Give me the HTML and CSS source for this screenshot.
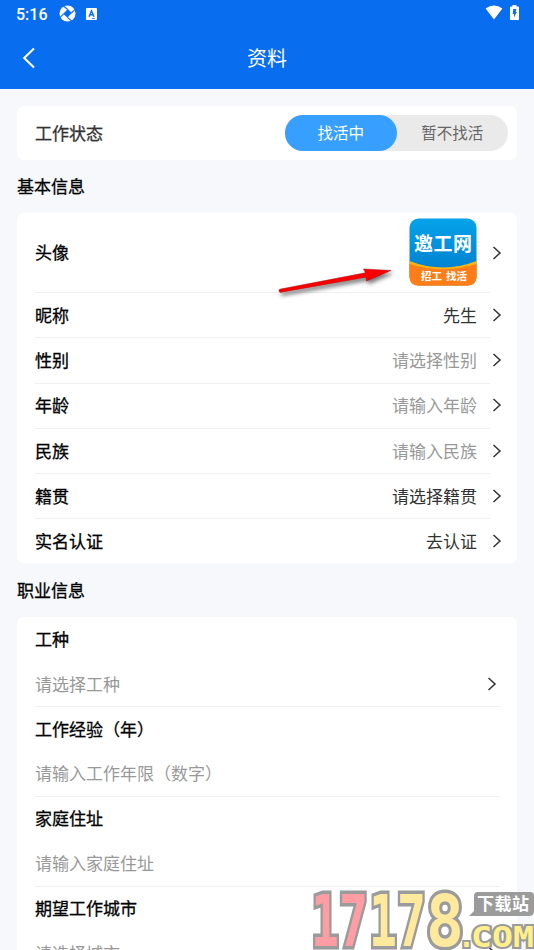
FILE: index.html
```html
<!DOCTYPE html>
<html lang="zh-CN">
<head>
<meta charset="utf-8">
<title>资料</title>
<link rel="stylesheet" href="styles.css">
</head>
<body>
<svg class="defs" width="0" height="0">
  <symbol id="chevron" viewBox="0 0 10 14"><path d="M1.5 1 L8 7 L1.5 13" fill="none" stroke="#333" stroke-width="1.5"/></symbol>
  <linearGradient id="sky" x1="0" y1="0" x2="0" y2="1"><stop offset="0" stop-color="#05a3ea"/><stop offset="1" stop-color="#0277c8"/></linearGradient>
</svg>
<div class="screen">
  <header class="header">
    <div class="status">
      <span class="clock">5:16</span>
      <svg class="swirl" width="17" height="17" viewBox="0 0 17 17"><circle cx="8.5" cy="8.5" r="8" fill="#fff"/><path d="M8.8 4 L12.8 8 L8.4 12.8 L4.2 8.8Z" fill="#096df0"/><path d="M8.8 4.5 L4.4 1 M12.4 8 L16 4.4 M8.4 12.3 L12.6 16 M4.6 8.8 L1 12.6" stroke="#096df0" stroke-width="1.1"/></svg>
      <svg class="abox" width="11" height="12" viewBox="0 0 11 12"><rect width="11" height="12" rx="1" fill="#fff"/><path d="M3 8.7 L5.5 2.8 L8 8.7 M4 6.8H7" fill="none" stroke="#096df0" stroke-width="1.4"/><path d="M6 10.5h3" stroke="#096df0" stroke-width=".7"/></svg>
      <svg class="wifi" width="18" height="15" viewBox="0 0 18 15"><path d="M.6 3.5 Q9 -2.5 17.4 3.5 L9 14.5Z" fill="#fff"/></svg>
      <svg class="battery" width="9" height="15" viewBox="0 0 9 15"><path d="M2.5 0h4v1.4H8q1 0 1 1V15H0V2.4q0-1 1-1h1.5Z" fill="#fff"/><path d="M3.3 4h3L5.7 7h1.1L4 12.5V9H2.7Z" fill="#096df0"/></svg>
    </div>
    <div class="nav">
      <svg class="back" width="14" height="22" viewBox="0 0 14 22"><path d="M12 1.5 L2.2 11 L12 20.5" fill="none" stroke="#fff" stroke-width="2.1"/></svg>
      <h1 class="title">资料</h1>
    </div>
  </header>

  <main class="content">
    <section class="card work">
      <span class="label soft">工作状态</span>
      <div class="switch"><span class="option on">找活中</span><span class="option">暂不找活</span></div>
    </section>

    <h2 class="heading">基本信息</h2>
    <section class="card basic">
      <div class="row tall"><span class="label">头像</span>
        <svg class="avatar" width="68" height="68" viewBox="0 0 68 68">
          <rect x=".5" y=".5" width="67" height="67" rx="9" fill="url(#sky)"/>
          <path d="M.5 43 Q34 56 67.5 43 V58.5 Q67.5 67.5 58.5 67.5 H9.5 Q.5 67.5 .5 58.5Z" fill="#ffb414"/>
          <path d="M.5 46 Q34 56.5 67.5 46 V58.5 Q67.5 67.5 58.5 67.5 H9.5 Q.5 67.5 .5 58.5Z" fill="#ff7d19"/>
          <text class="logo-name" x="5" y="33" textLength="58">邀工网</text>
          <text class="logo-tag" x="12" y="61.5">招工</text><text class="logo-tag" x="37" y="61.5">找活</text>
        </svg>
        <svg class="arrow"><use href="#chevron"/></svg></div>
      <div class="row"><span class="label">昵称</span><span class="value">先生</span><svg class="arrow"><use href="#chevron"/></svg></div>
      <div class="row"><span class="label">性别</span><span class="value hint">请选择性别</span><svg class="arrow"><use href="#chevron"/></svg></div>
      <div class="row"><span class="label">年龄</span><span class="value hint">请输入年龄</span><svg class="arrow"><use href="#chevron"/></svg></div>
      <div class="row"><span class="label">民族</span><span class="value hint">请输入民族</span><svg class="arrow"><use href="#chevron"/></svg></div>
      <div class="row"><span class="label">籍贯</span><span class="value">请选择籍贯</span><svg class="arrow"><use href="#chevron"/></svg></div>
      <div class="row"><span class="label">实名认证</span><span class="value">去认证</span><svg class="arrow"><use href="#chevron"/></svg></div>
    </section>

    <h2 class="heading">职业信息</h2>
    <section class="card job">
      <div class="field"><span class="label">工种</span><div class="entry"><span class="hint">请选择工种</span><svg class="arrow"><use href="#chevron"/></svg></div></div>
      <div class="field"><span class="label">工作经验（年）</span><div class="entry"><span class="hint">请输入工作年限（数字）</span></div></div>
      <div class="field"><span class="label">家庭住址</span><div class="entry"><span class="hint">请输入家庭住址</span></div></div>
      <div class="field"><span class="label">期望工作城市</span><div class="entry"><span class="hint">请选择城市</span><svg class="arrow"><use href="#chevron"/></svg></div></div>
    </section>
  </main>

  <svg class="pointer" width="124" height="40" viewBox="0 0 124 40"><path d="M3.5 24.3 L89.5 7.8 L87.5 4 L115 5.5 L90.5 16 L90 12.2 L4 27.4 Q2 26 3.5 24.3Z" fill="#f90000" stroke="#b00c0c" stroke-width=".5"/></svg>

  <svg class="watermark" width="226" height="64" viewBox="0 0 226 64">
    <g class="digits">
      <text class="red" x="3" y="60" textLength="28" lengthAdjust="spacingAndGlyphs">1</text>
      <text class="red" x="31" y="60" textLength="29" lengthAdjust="spacingAndGlyphs">7</text>
      <text x="61" y="60" textLength="28" lengthAdjust="spacingAndGlyphs">1</text>
      <text x="89" y="60" textLength="29" lengthAdjust="spacingAndGlyphs">7</text>
      <text x="118" y="60" textLength="38" lengthAdjust="spacingAndGlyphs">8</text>
    </g>
    <path d="M175 6 H222 Q226 6 226 10 V25 Q226 30 221 30 H161 L166 25 V10 Q166 6 170 6Z" fill="#9b9b9b"/>
    <text class="site" x="169" y="24" textLength="52">下载站</text>
    <text class="domain" x="150" y="61">.</text><text class="domain" x="163" y="61" textLength="63" lengthAdjust="spacingAndGlyphs">COM</text>
  </svg>
</div>
</body>
</html>
```
FILE: styles.css
```css
* { box-sizing: border-box; }
body { margin: 0; background: #f6f8fb; font-family: Roboto, "Noto Sans CJK SC", sans-serif; font-size: 17px; color: #333; }
.defs { position: absolute; }
.screen { position: relative; width: 534px; height: 950px; overflow: hidden; }
.header { height: 89px; background: #096df0; color: #fff; }
.status { height: 28px; padding: 0 15px 0 16px; display: flex; align-items: center; }
.clock { font-size: 16px; font-weight: 500; width: 43px; }
.swirl { margin-top: -1px; }
.abox { margin-left: 10px; }
.wifi { margin-left: auto; margin-top: -3px; }
.battery { margin: -3px 0 0 7px; }
.nav { height: 60px; display: grid; grid-template-columns: 60px 1fr 60px; align-items: center; }
.back { margin-left: 22px; }
.title { margin: 0; padding-top: 2px; text-align: center; font-size: 20px; font-weight: 400; line-height: 28px; }
.content { padding: 17px 17px 0; }
.card { background: #fff; border-radius: 7px; }
.label { color: #000; line-height: 24px; padding-top: 2px; -webkit-text-stroke: .3px currentColor; }
.soft { color: #333; }
.work { height: 53.5px; padding: 0 9px 0 18px; display: flex; align-items: center; justify-content: space-between; }
.switch { width: 223px; height: 36px; border-radius: 18px; background: #eaeaea; display: flex; font-size: 15.5px; line-height: 38px; text-align: center; color: #666; }
.option { flex: 1; }
.on { background: #379fff; color: #fff; border-radius: 18px; height: 36px; }
.heading { margin: 0; height: 53.5px; line-height: 55px; font-size: 17px; font-weight: 400; color: #000; -webkit-text-stroke: .3px #000; }
.basic { padding-left: 18px; height: 350px; }
.basic + .heading { line-height: 56px; }
.row { height: 45.3px; display: flex; align-items: center; position: relative; padding-right: 15px; }
.row + .row { background: linear-gradient(#f0f0f0, #f0f0f0) 0 0 / calc(100% - 27px) 1px no-repeat; }
.tall { height: 79px; }
.tall .label { padding-top: 0; }
.value { margin: 0 15px 0 auto; line-height: 24px; padding-top: 2px; }
.avatar { margin: -1px 15px 0 auto; }
.arrow { width: 10px; height: 14px; flex: none; }
.hint { color: #999; }
.job { padding: 1px 17px 0 18px; height: 360px; }
.field { height: 89.7px; border-bottom: 1px solid #f0f0f0; padding-top: 8.5px; }
.field .label { display: block; }
.entry { height: 24px; margin-top: 19.5px; display: flex; align-items: center; justify-content: space-between; padding-right: 3px; line-height: 24px; }
.entry .hint { padding-top: 2px; }
.logo-name { font: 700 19px "Noto Sans CJK SC", sans-serif; fill: #fff; }
.logo-tag { font: 700 10.5px "Noto Sans CJK SC", sans-serif; fill: #fff; }
.pointer { position: absolute; left: 276px; top: 265px; filter: drop-shadow(2px 3px 2px rgba(0,0,0,.55)); }
.watermark { position: absolute; left: 308px; top: 886px; }
.digits { font: 700 72px "DejaVu Sans Mono", monospace; fill: #ffe99d; stroke: #9b9b9b; stroke-width: 7px; paint-order: stroke; }
.digits .red { fill: #ff9da5; }
.site { font: 700 17px "Noto Sans CJK SC", sans-serif; fill: #fff; }
.domain { font: 700 28px "DejaVu Sans Mono", monospace; fill: #fff08c; stroke: #9b9b9b; stroke-width: 4px; paint-order: stroke; }
```
